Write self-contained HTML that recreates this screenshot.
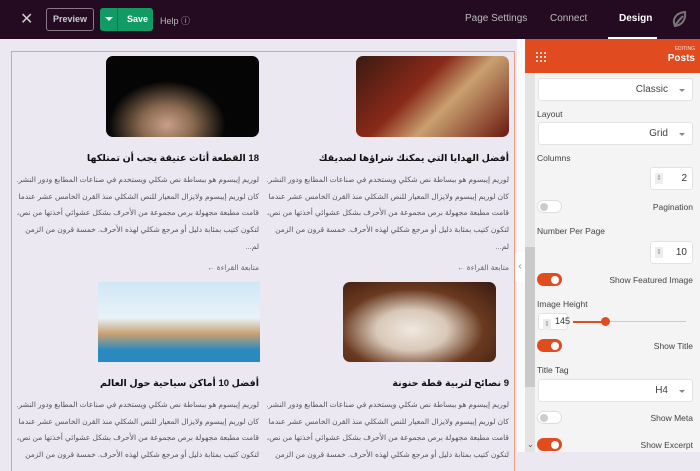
<!DOCTYPE html>
<html><head><meta charset="utf-8"><style>
*{box-sizing:border-box;margin:0;padding:0}
body{width:700px;height:452px;overflow:hidden;font-family:"Liberation Sans","DejaVu Sans",sans-serif;background:#ebe8f2;position:relative}
.top{position:absolute;left:0;top:0;width:700px;height:39px;background:#240b21;color:#fff}
.top .x{position:absolute;left:20px;top:9px;font-size:16px;color:#ccc}
.prev{position:absolute;left:46px;top:8px;width:48px;height:23px;border:1px solid #8a7a88;border-radius:3px;color:#ccc;font-size:9px;font-weight:bold;text-align:center;line-height:21px}
.save{position:absolute;left:100px;top:8px;width:53px;height:23px;background:#129a64;border-radius:3px;color:#fff;font-size:9px;font-weight:bold}
.save .d{position:absolute;left:0;top:0;width:18px;height:23px;border-right:1px solid #0d7a4f}
.save .d:after{content:"";position:absolute;left:5px;top:9px;border:4px solid transparent;border-top:4px solid #fff}
.save .t{position:absolute;left:27px;top:6px}
.help{position:absolute;left:160px;top:14px;font-size:9px;color:#bbb}
.tab{position:absolute;top:13px;font-size:10px;color:#bbb}
.uline{position:absolute;left:608px;top:37px;width:49px;height:2px;background:#fff}
.canvas{position:absolute;left:11px;top:51px;width:504px;height:420px;border:1px solid #ef9c86;border-bottom:none}
.card{position:absolute;width:154px;text-align:right;direction:rtl}
.img{width:153px;height:81px;border-radius:7px;overflow:hidden}
.card h4{font-size:9.5px;margin-top:16px;color:#111;white-space:nowrap}
.card p{font-size:7.5px;line-height:16.7px;color:#555;margin-top:8px;white-space:nowrap;width:252px;overflow:hidden}
.card .rm{font-size:7.5px;color:#666;margin-top:7px}
.strip{position:absolute;left:517px;top:39px;width:8px;height:413px;background:#fafafa}
.coll{position:absolute;left:515px;top:252px;width:10px;height:30px;background:#fff;border-radius:3px 0 0 3px;color:#888;font-size:10px;line-height:30px;text-align:center}
.sb{position:absolute;left:525px;top:39px;width:10px;height:413px;background:#e3e3e3}
.sb i{position:absolute;left:0;top:208px;width:10px;height:140px;background:#c9c9c9}
.panel{position:absolute;left:535px;top:73px;width:165px;height:379px;background:#f4f4f4}
.head{position:absolute;left:525px;top:39px;width:175px;height:34px;background:#e04c1f;color:#fff}
.head .e{position:absolute;right:5px;top:7px;font-size:5px;opacity:.8}
.head .p{position:absolute;right:5px;top:14px;font-size:10px;font-weight:bold}
.sel{position:absolute;left:538px;width:155px;height:23px;background:#fff;border:1px solid #e2e2e2;border-radius:3px;font-size:10px;color:#444;text-align:right;padding-right:24px;line-height:21px}
.sel:after{content:"";position:absolute;right:7px;top:10px;border:3px solid transparent;border-top:3px solid #888}
.lbl{position:absolute;left:537px;font-size:8.5px;color:#444}
.rl{position:absolute;right:7px;font-size:8.5px;color:#444}
.num{position:absolute;right:7px;width:43px;height:23px;background:#fff;border:1px solid #e2e2e2;border-radius:3px;font-size:10px;color:#333;text-align:right;padding-right:5px;line-height:21px}
.num:before,.mini:before{content:"⇕";position:absolute;left:4px;top:5px;width:8px;height:11px;background:#eee;font-size:7px;color:#999;line-height:11px;text-align:center}
.tg{position:absolute;left:537px;width:25px;height:13px;border-radius:7px;background:#fff;border:1px solid #ddd}
.tg:after{content:"";position:absolute;left:2px;top:2px;width:8px;height:8px;border-radius:50%;background:#ccc}
.tg.on{background:#e04c1f;border-color:#e04c1f}
.tg.on:after{left:13px;background:#fff}
</style></head><body>
<div class="top">
<span class="x">✕</span>
<div class="prev">Preview</div>
<div class="save"><div class="d"></div><span class="t">Save</span></div>
<span class="help">Help ⓘ</span>
<span class="tab" style="left:465px">Page Settings</span>
<span class="tab" style="left:550px">Connect</span>
<span class="tab" style="left:619px;color:#fff;font-weight:bold">Design</span>
<svg style="position:absolute;left:672px;top:10px" width="16" height="18" viewBox="0 0 16 18"><path d="M3 16C0 10 3 3 13 2c1 8-3 13-10 14zM3 16c2-4 5-7 8-10" fill="none" stroke="#777" stroke-width="2"/></svg>
<div class="uline"></div>
</div>
<div class="canvas"></div>

<div class="card" style="left:355px;top:56px">
<div class="img" style="background:linear-gradient(135deg,#3a1a10,#8a2a1a 40%,#c9a070 60%,#6a1810)"></div>
<h4>أفضل الهدايا التي يمكنك شراؤها لصديقك</h4>
<p>لوريم إيبسوم هو ببساطة نص شكلي ويستخدم في صناعات المطابع ودور النشر.<br>كان لوريم إيبسوم ولايزال المعيار للنص الشكلي منذ القرن الخامس عشر عندما<br>قامت مطبعة مجهولة برص مجموعة من الأحرف بشكل عشوائي أخذتها من نص،<br>لتكون كتيب بمثابة دليل أو مرجع شكلي لهذه الأحرف. خمسة قرون من الزمن<br>لم...</p>
<div class="rm">متابعة القراءة ←</div>
</div>
<div class="card" style="left:105px;top:56px">
<div class="img" style="background:radial-gradient(ellipse at 40% 85%,#c9a08a 0,#8a6a50 20%,#050505 45%)"></div>
<h4>18 القطعة أثاث عتيقة يجب أن تمتلكها</h4>
<p>لوريم إيبسوم هو ببساطة نص شكلي ويستخدم في صناعات المطابع ودور النشر.<br>كان لوريم إيبسوم ولايزال المعيار للنص الشكلي منذ القرن الخامس عشر عندما<br>قامت مطبعة مجهولة برص مجموعة من الأحرف بشكل عشوائي أخذتها من نص،<br>لتكون كتيب بمثابة دليل أو مرجع شكلي لهذه الأحرف. خمسة قرون من الزمن<br>لم...</p>
<div class="rm">متابعة القراءة ←</div>
</div>
<div class="card" style="left:355px;top:282px">
<div class="img" style="height:80px;margin-right:13px;background:radial-gradient(ellipse at 45% 60%,#f0e8e0 0,#d8c8b8 30%,#6a3a20 60%,#3a1a10)"></div>
<h4>9 نصائح لتربية قطة حنونة</h4>
<p>لوريم إيبسوم هو ببساطة نص شكلي ويستخدم في صناعات المطابع ودور النشر.<br>كان لوريم إيبسوم ولايزال المعيار للنص الشكلي منذ القرن الخامس عشر عندما<br>قامت مطبعة مجهولة برص مجموعة من الأحرف بشكل عشوائي أخذتها من نص،<br>لتكون كتيب بمثابة دليل أو مرجع شكلي لهذه الأحرف. خمسة قرون من الزمن</p>
</div>
<div class="card" style="left:105px;top:282px">
<div class="img" style="width:162px;height:80px;margin-right:-1px;border-radius:0;background:linear-gradient(180deg,#cfe8f6,#e8f2f8 45%,#c8a070 65%,#2a8ac0 85%)"></div>
<h4>أفضل 10 أماكن سياحية حول العالم</h4>
<p>لوريم إيبسوم هو ببساطة نص شكلي ويستخدم في صناعات المطابع ودور النشر.<br>كان لوريم إيبسوم ولايزال المعيار للنص الشكلي منذ القرن الخامس عشر عندما<br>قامت مطبعة مجهولة برص مجموعة من الأحرف بشكل عشوائي أخذتها من نص،<br>لتكون كتيب بمثابة دليل أو مرجع شكلي لهذه الأحرف. خمسة قرون من الزمن</p>
</div>

<div class="strip"></div>
<div class="coll">‹</div>
<div class="sb"><i></i></div>
<div class="panel"></div>
<div class="head"><svg style="position:absolute;left:10px;top:12px" width="12" height="12"><g fill="#fff"><circle cx="2" cy="2" r="1"/><circle cx="6" cy="2" r="1"/><circle cx="10" cy="2" r="1"/><circle cx="2" cy="6" r="1"/><circle cx="6" cy="6" r="1"/><circle cx="10" cy="6" r="1"/><circle cx="2" cy="10" r="1"/><circle cx="6" cy="10" r="1"/><circle cx="10" cy="10" r="1"/></g></svg><span class="e">EDITING</span><span class="p">Posts</span></div>

<div class="sel" style="top:78px">Classic</div>
<div class="lbl" style="top:109px">Layout</div>
<div class="sel" style="top:122px">Grid</div>
<div class="lbl" style="top:153px">Columns</div>
<div class="num" style="top:167px">2</div>
<div class="tg" style="top:200px"></div><div class="rl" style="top:202px">Pagination</div>
<div class="lbl" style="top:226px">Number Per Page</div>
<div class="num" style="top:241px">10</div>
<div class="tg on" style="top:273px"></div><div class="rl" style="top:275px">Show Featured Image</div>
<div class="lbl" style="top:299px">Image Height</div>
<div class="mini" style="position:absolute;left:538px;top:313px;width:30px;height:17px;background:#fff;border:1px solid #e2e2e2;border-radius:3px;font-size:9px;color:#333;padding-left:16px;line-height:15px">145</div>
<div style="position:absolute;left:573px;top:321px;width:33px;height:2px;background:#e04c1f"></div>
<div style="position:absolute;left:606px;top:321px;width:80px;height:1px;background:#ccc"></div>
<div style="position:absolute;left:601px;top:317px;width:9px;height:9px;border-radius:50%;background:#e04c1f"></div>
<div class="tg on" style="top:339px"></div><div class="rl" style="top:341px">Show Title</div>
<div class="lbl" style="top:365px">Title Tag</div>
<div class="sel" style="top:379px">H4</div>
<div class="tg" style="top:411px"></div><div class="rl" style="top:413px">Show Meta</div>
<div class="tg on" style="top:438px"></div><div class="rl" style="top:440px">Show Excerpt</div>
<div style="position:absolute;left:527px;top:440px;font-size:8px;color:#555">⌄</div>
</body></html>
